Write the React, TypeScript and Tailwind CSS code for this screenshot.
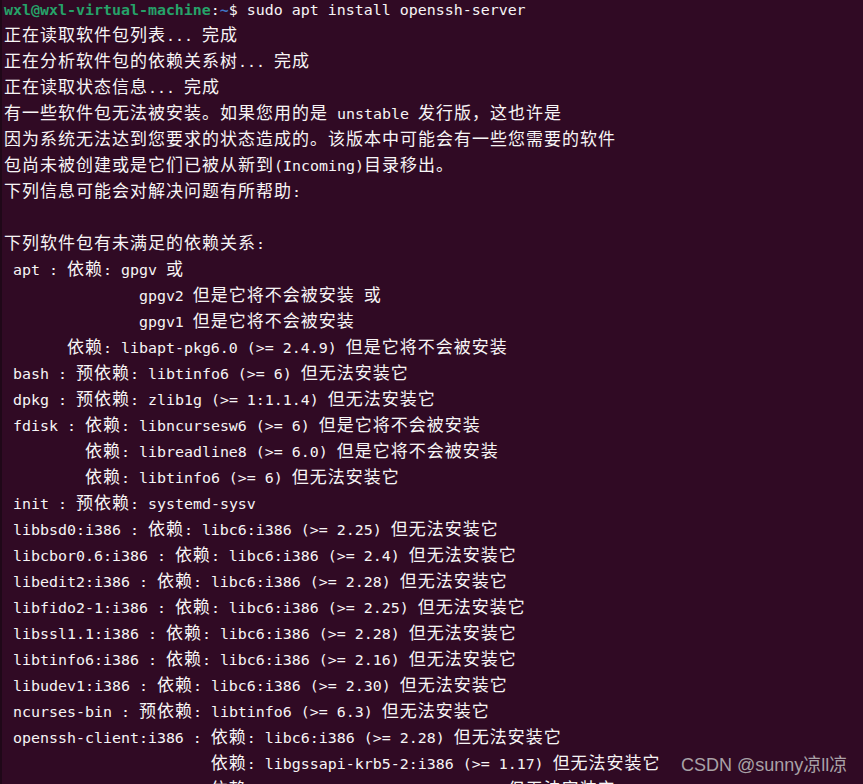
const cjk = /([\u3000-\u303f\u4e00-\u9fff\uff00-\uffef]+)/;

// terminal output, one entry per row
const lines: string[] = [
  "正在读取软件包列表... 完成",
  "正在分析软件包的依赖关系树... 完成",
  "正在读取状态信息... 完成",
  "有一些软件包无法被安装。如果您用的是 unstable 发行版，这也许是",
  "因为系统无法达到您要求的状态造成的。该版本中可能会有一些您需要的软件",
  "包尚未被创建或是它们已被从新到(Incoming)目录移出。",
  "下列信息可能会对解决问题有所帮助:",
  "",
  "下列软件包有未满足的依赖关系:",
  " apt : 依赖: gpgv 或",
  "               gpgv2 但是它将不会被安装 或",
  "               gpgv1 但是它将不会被安装",
  "       依赖: libapt-pkg6.0 (>= 2.4.9) 但是它将不会被安装",
  " bash : 预依赖: libtinfo6 (>= 6) 但无法安装它",
  " dpkg : 预依赖: zlib1g (>= 1:1.1.4) 但无法安装它",
  " fdisk : 依赖: libncursesw6 (>= 6) 但是它将不会被安装",
  "         依赖: libreadline8 (>= 6.0) 但是它将不会被安装",
  "         依赖: libtinfo6 (>= 6) 但无法安装它",
  " init : 预依赖: systemd-sysv",
  " libbsd0:i386 : 依赖: libc6:i386 (>= 2.25) 但无法安装它",
  " libcbor0.6:i386 : 依赖: libc6:i386 (>= 2.4) 但无法安装它",
  " libedit2:i386 : 依赖: libc6:i386 (>= 2.28) 但无法安装它",
  " libfido2-1:i386 : 依赖: libc6:i386 (>= 2.25) 但无法安装它",
  " libssl1.1:i386 : 依赖: libc6:i386 (>= 2.28) 但无法安装它",
  " libtinfo6:i386 : 依赖: libc6:i386 (>= 2.16) 但无法安装它",
  " libudev1:i386 : 依赖: libc6:i386 (>= 2.30) 但无法安装它",
  " ncurses-bin : 预依赖: libtinfo6 (>= 6.3) 但无法安装它",
  " openssh-client:i386 : 依赖: libc6:i386 (>= 2.28) 但无法安装它",
  "                       依赖: libgssapi-krb5-2:i386 (>= 1.17) 但无法安装它",
  "                       依赖: libselinux1:i386 (>= 3.1~) 但无法安装它",
];

function Row({ text }: { text: string }) {
  const parts = text.split(cjk).filter((p) => p !== "");
  return (
    <div className="h-[26px] whitespace-pre">
      {parts.map((p, i) =>
        cjk.test(p) ? (
          <span
            key={i}
            className="font-['Noto_Sans_CJK_SC',sans-serif] text-[17px] leading-none tracking-[1px]"
          >
            {p}
          </span>
        ) : (
          <span key={i}>{p}</span>
        )
      )}
    </div>
  );
}

export default function App() {
  return (
    <div className="relative h-[784px] w-[863px] overflow-hidden bg-[#300a24] border-l-2 border-[#1f0818]">
      <div className="-mt-[3px] pl-[2px] font-['DejaVu_Sans_Mono',monospace] text-[14.95px] leading-[26px] text-[#f7f5f6]">
        <div className="h-[26px] whitespace-pre">
          <span className="font-bold text-[#26a269]">wxl@wxl-virtual-machine</span>
          <span>:</span>
          <span className="font-bold text-[#3f74c4]">~</span>
          <span>$ sudo apt install openssh-server</span>
        </div>
        {lines.map((l, i) => (
          <Row key={i} text={l} />
        ))}
      </div>
      <div className="absolute left-[679px] top-[756px] font-['Liberation_Sans','Noto_Sans_CJK_SC',sans-serif] text-[18px] leading-none text-[#a9a2a7]">
        CSDN @sunny凉ll凉
      </div>
    </div>
  );
}
